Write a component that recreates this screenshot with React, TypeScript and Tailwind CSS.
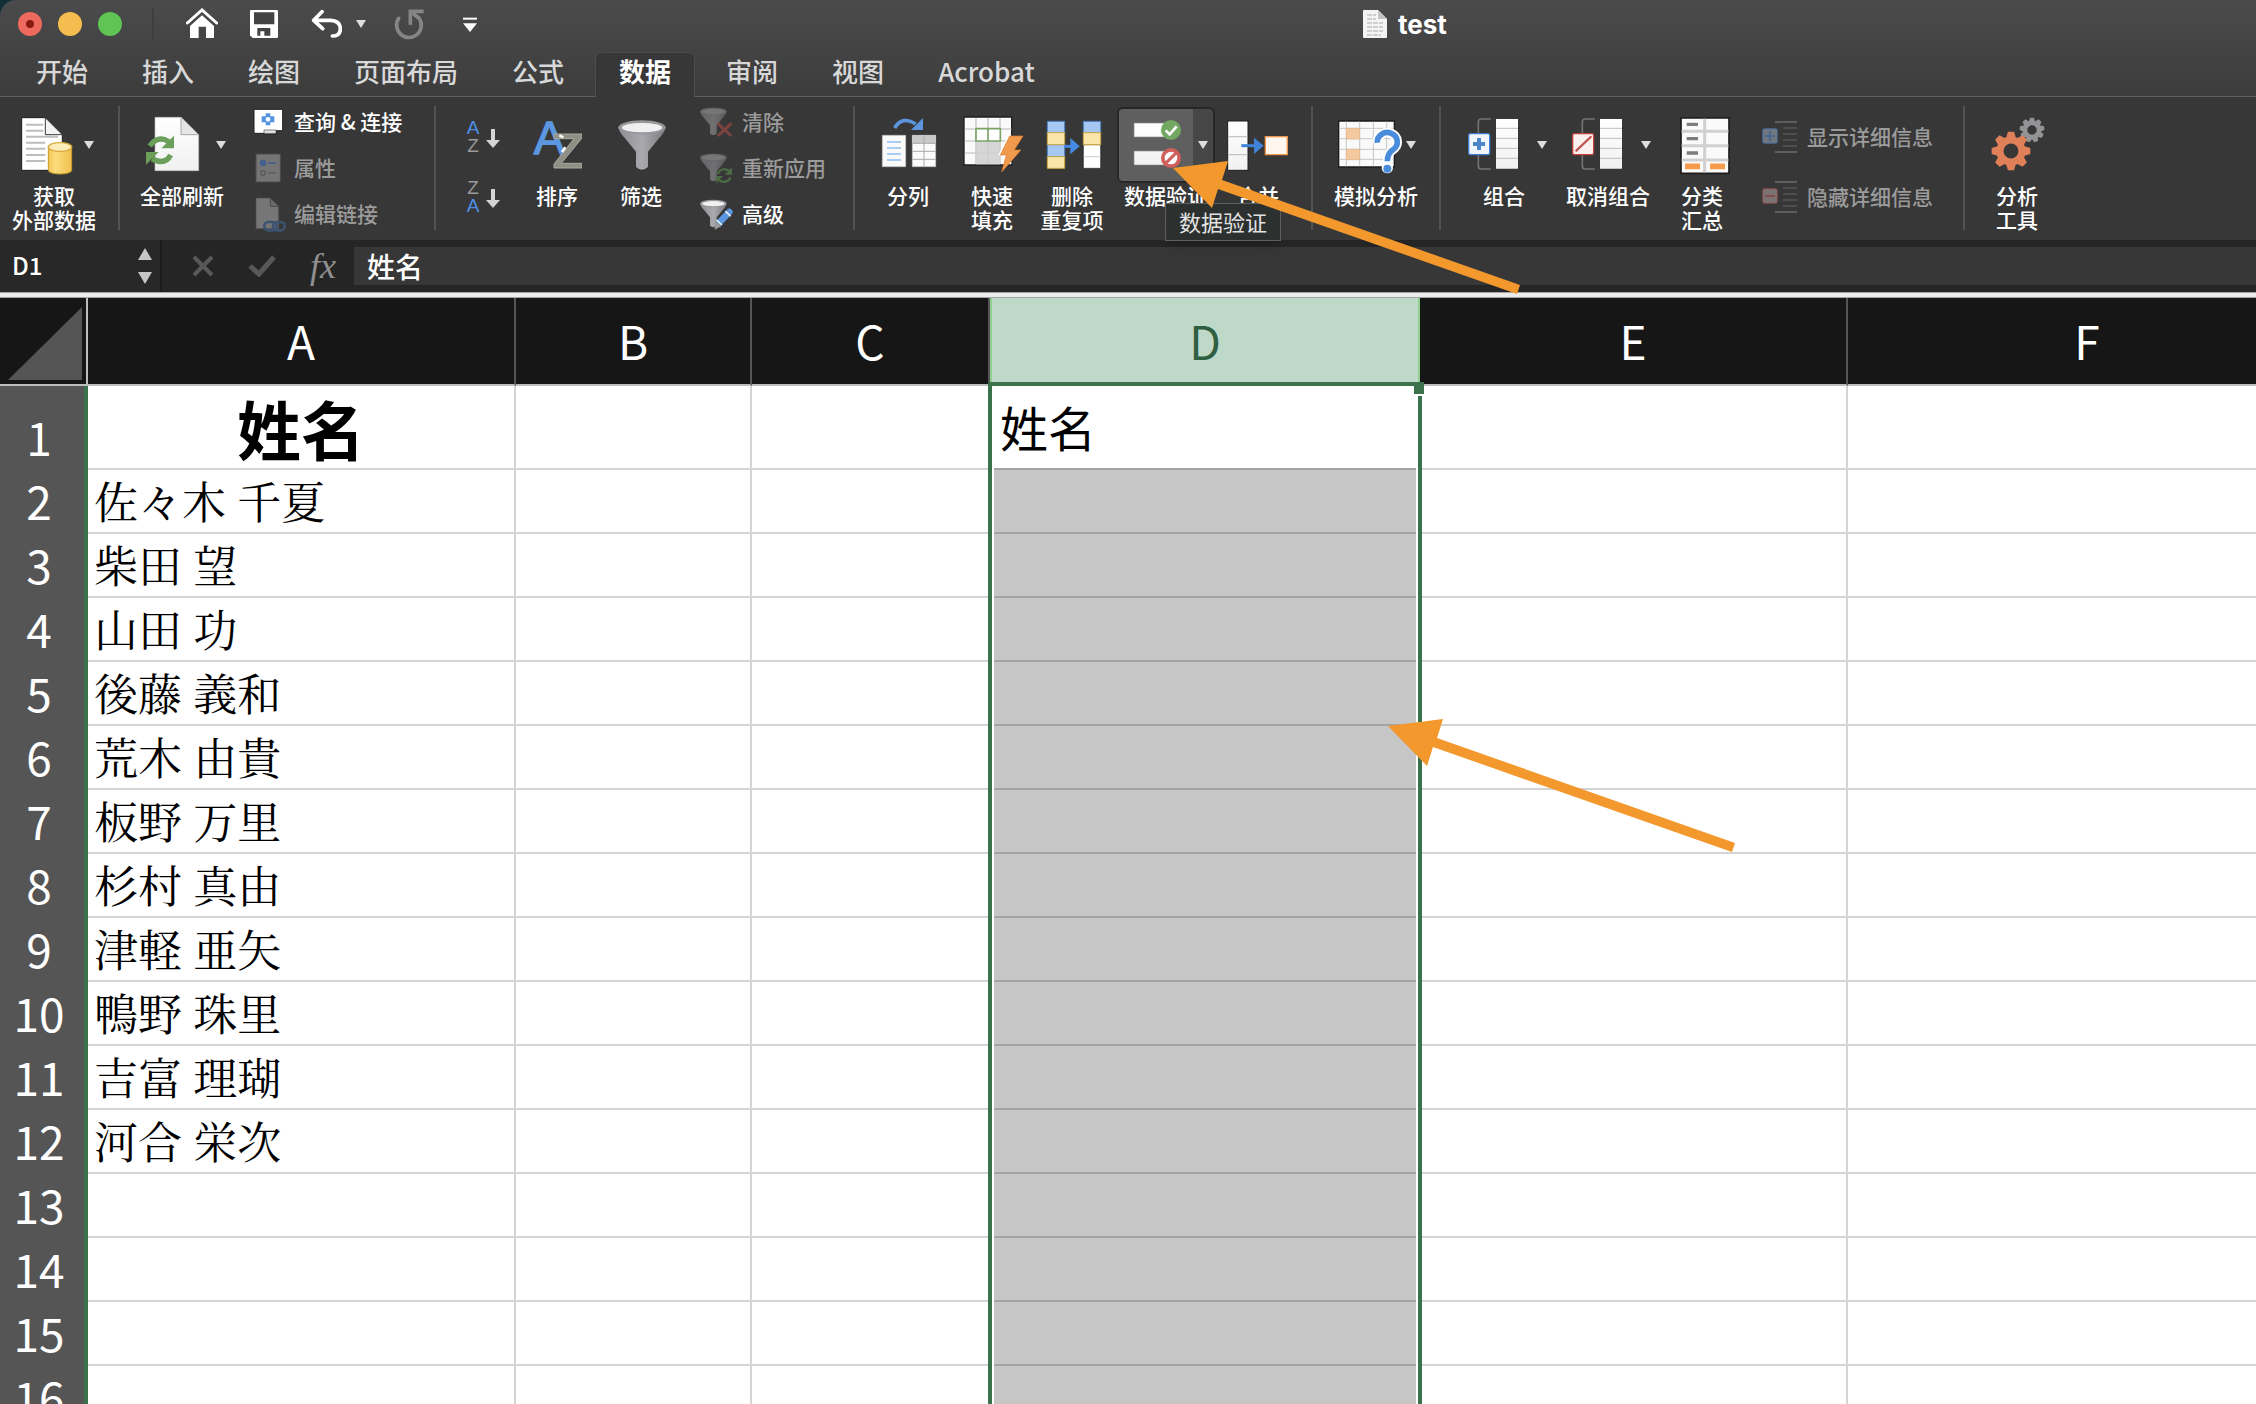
import type { ReactNode } from "react";

const TABS = ["开始", "插入", "绘图", "页面布局", "公式", "数据", "审阅", "视图", "Acrobat"];
const ACTIVE_TAB = "数据";

const COLUMNS = [
  { name: "A", width: "w-[428px]" },
  { name: "B", width: "w-[236px]" },
  { name: "C", width: "w-[238px]" },
  { name: "D", width: "w-[430px]" },
  { name: "E", width: "w-[428px]" },
  { name: "F", width: "w-[480px]" },
];

const NAMES = [
  "佐々木 千夏",
  "柴田 望",
  "山田 功",
  "後藤 義和",
  "荒木 由貴",
  "板野 万里",
  "杉村 真由",
  "津軽 亜矢",
  "鴨野 珠里",
  "吉富 理瑚",
  "河合 栄次",
  "",
  "",
  "",
  "",
];

/* ---------- shared bits ---------- */

function Caret() {
  return (
    <svg width="10" height="8" viewBox="0 0 10 8" className="shrink-0">
      <path d="M0 0h10L5 8z" fill="#dedede" />
    </svg>
  );
}

// Large ribbon icons share a 72px tall artboard at three units per pixel
function Art({ x, w, children }: { x: number; w: number; children: ReactNode }) {
  return (
    <svg width={w} height="72" viewBox={`${x} 39 ${w * 3} 216`} className="shrink-0">
      {children}
    </svg>
  );
}

function SmallArt({ x, y, w = 36, children }: { x: number; y: number; w?: number; children: ReactNode }) {
  return (
    <svg width={w} height="36" viewBox={`${x} ${y} ${w * 3} 108`} className="shrink-0">
      {children}
    </svg>
  );
}

function Gear({ cx, cy, r, teeth, color }: { cx: number; cy: number; r: number; teeth: number; color: string }) {
  const angles = Array.from({ length: teeth }, (_, i) => (360 / teeth) * i);
  const t = r * 0.2;
  return (
    <g fill={color}>
      <circle cx={cx} cy={cy} r={r * 0.57} fill="none" stroke={color} strokeWidth={r * 0.37} />
      {angles.map((a) => (
        <path
          key={a}
          d={`M${cx - t * 1.3} ${cy - r * 0.65}L${cx - t * 0.8} ${cy - r}H${cx + t * 0.8}L${cx + t * 1.3} ${cy - r * 0.65}z`}
          transform={`rotate(${a} ${cx} ${cy})`}
        />
      ))}
    </g>
  );
}

function Gradients() {
  return (
    <svg width="0" height="0" className="absolute">
      <defs>
        <linearGradient id="steel" x1="0" x2="1" y1="0" y2="0">
          <stop offset="0" stopColor="#8f8f93" />
          <stop offset="0.5" stopColor="#aaaaae" />
          <stop offset="1" stopColor="#7c7c80" />
        </linearGradient>
        <linearGradient id="paper" x1="0" x2="0" y1="0" y2="1">
          <stop offset="0" stopColor="#ffffff" />
          <stop offset="1" stopColor="#f1f1f1" />
        </linearGradient>
        <linearGradient id="gold" x1="0" x2="1" y1="0" y2="0">
          <stop offset="0" stopColor="#f3c653" />
          <stop offset="0.3" stopColor="#fbdc7c" />
          <stop offset="1" stopColor="#f2c14e" />
        </linearGradient>
      </defs>
    </svg>
  );
}

/* ---------- large icons ---------- */

function ExternalDataIcon() {
  return (
    <Art x={42} w={66}>
      <path d="M65 65h71l51 51v107H65z" fill="#fff" stroke="#1d1d1d" strokeWidth="3" />
      <path d="M78 86h52M78 104h52M78 122h96M78 140h58M78 158h58M78 177h58M78 195h58" stroke="#bdbdbd" strokeWidth="6" />
      <path d="M136 65v51h51z" fill="#f3f3f3" stroke="#3a3a3a" strokeWidth="3" />
      <path d="M145 153v70a35 11 0 0 0 70 0v-70z" fill="url(#gold)" stroke="#c99a2e" strokeWidth="3" />
      <ellipse cx="180" cy="153" rx="35" ry="13" fill="#fdeebb" stroke="#d9aa3c" strokeWidth="4" />
    </Art>
  );
}

function RefreshAllIcon() {
  return (
    <Art x={414} w={74}>
      <path d="M465 64h78l53 52v108H465z" fill="url(#paper)" stroke="#bcbcbc" strokeWidth="2" />
      <path d="M543 64v52h53z" fill="#e6e6e6" stroke="#a5a5a5" strokeWidth="3" />
      <path d="M449 150Q474 116 507 137" fill="none" stroke="#6b9f5a" strokeWidth="16" />
      <path d="M522 119v38h-38z" fill="#6b9f5a" />
      <path d="M512 177Q496 208 456 189" fill="none" stroke="#6b9f5a" strokeWidth="16" />
      <path d="M438 206v-38h38z" fill="#6b9f5a" />
    </Art>
  );
}

function SortIcon() {
  return (
    <Art x={306} w={50}>
      <text x="311" y="174" fill="#5b97e0" fontSize="140" fontFamily="Liberation Sans" stroke="#5b97e0" strokeWidth="4">A</text>
      <path d="M372 114h84v12l-62 76h62v14h-84v-12l60-76h-60z" fill="#8f8f86" stroke="#aaa99c" strokeWidth="3" />
      <path d="M388 118l12 6M396 168l10-14" stroke="#fff" strokeWidth="8" />
    </Art>
  );
}

function FunnelShape({ dark }: { dark?: boolean }) {
  return (
    <g>
      <path d="M565 96q4 14 20 31l33 40v46q18 16 36 0v-46l33-40q16-17 20-31z" fill="url(#steel)" />
      <ellipse cx="636" cy="94" rx="71" ry="21" fill="#98989c" />
      <ellipse cx="636" cy="95" rx="60" ry="14" fill={dark ? "#b5b5b5" : "#f0f0f0"} />
    </g>
  );
}

function FilterIcon() {
  return (
    <Art x={552} w={54}>
      <FunnelShape />
    </Art>
  );
}

function TextToColumnsIcon() {
  return (
    <Art x={57} w={60}>
      <path d="M107 96Q130 58 170 84" fill="none" stroke="#5b95dd" strokeWidth="11" />
      <path d="M192 66v36h-36z" fill="#5b95dd" />
      <path d="M70 118h70v94H70z" fill="#fafafa" stroke="#c9c9c9" strokeWidth="2" />
      <path d="M84 138h42M84 156h42M84 174h42M84 192h42" stroke="#a9ccf2" strokeWidth="6" />
      <path d="M160 118h70v94h-70z" fill="#fafafa" stroke="#c9c9c9" strokeWidth="2" />
      <path d="M160 118h70v24h-70z" fill="#c9c9c9" />
      <path d="M195 118v94M160 142h70M160 166h70M160 190h70" stroke="#aaa" strokeWidth="3" />
    </Art>
  );
}

function FlashFillIcon() {
  return (
    <Art x={303} w={64}>
      <path d="M315 63h143v144H315z" fill="#fafafa" stroke="#1f1f1f" strokeWidth="4" />
      <path d="M351 136h72v69h-72z" fill="#d6d6d6" />
      <path d="M351 66v138M387 66v138M423 66v138M318 99h139M318 135h139M318 171h139" stroke="#cfcfcf" strokeWidth="5" />
      <path d="M351 98h73v37h-73zM387 98v37" fill="#fff" stroke="#7aa368" strokeWidth="5" />
      <path d="M448 118l-30 58 18 8-4 20h25v-86z" fill="#fff" />
      <path d="M452 120h40l-26 42h20l-58 66 14-51h-18z" fill="#f09a4e" stroke="#d97b2e" strokeWidth="2" />
    </Art>
  );
}

function RemoveDuplicatesIcon() {
  return (
    <Art x={546} w={60}>
      <path d="M562 76h52v36h-52zM562 146h52v36h-52z" fill="#a5c8f3" stroke="#4b80be" strokeWidth="3" />
      <path d="M562 110h52v36h-52zM562 182h52v35h-52z" fill="#fae6a8" stroke="#c8a845" strokeWidth="3" />
      <path d="M670 76h52v34h-52z" fill="#a5c8f3" stroke="#4b80be" strokeWidth="3" />
      <path d="M670 146h52v71h-52z" fill="#fff" stroke="#222" strokeWidth="2" />
      <path d="M671 182h50" stroke="#ccc" strokeWidth="3" />
      <path d="M670 110h52v36h-52z" fill="#fae6a8" stroke="#c8a845" strokeWidth="3" />
      <path d="M612 151h22" stroke="#458ae3" strokeWidth="9" />
      <path d="M631 126l28 25-28 24z" fill="#458ae3" />
    </Art>
  );
}

function ValidationIcon() {
  return (
    <Art x={780} w={74}>
      <path d="M826 82h92v40h-92zM826 166h92v40h-92z" fill="url(#paper)" stroke="#d8d8d8" strokeWidth="2" />
      <circle cx="936" cy="102" r="30" fill="#73a862" />
      <path d="M920 103l12 12 21-24" fill="none" stroke="#fff" strokeWidth="8" />
      <circle cx="936" cy="186" r="30" fill="#cf5f5b" />
      <circle cx="936" cy="186" r="19" fill="#fff" />
      <path d="M922 200l28-28" stroke="#cf5f5b" strokeWidth="9" />
    </Art>
  );
}

function ConsolidateIcon() {
  return (
    <Art x={1098} w={66}>
      <path d="M1106 75h61v148h-61z" fill="url(#paper)" stroke="#1c1c1c" strokeWidth="3" />
      <path d="M1108 122h57M1108 176h57" stroke="#c4c4c4" strokeWidth="4" />
      <path d="M1147 149h40" stroke="#3f82d6" strokeWidth="9" />
      <path d="M1185 125l29 24-29 25z" fill="#3f82d6" />
      <path d="M1219 122h66v54h-66z" fill="#fff7ef" stroke="#ee944a" strokeWidth="4" />
    </Art>
  );
}

function WhatIfIcon() {
  return (
    <Art x={138} w={66}>
      <path d="M146 75h167v138H146z" fill="#fafafa" stroke="#1c1c1c" strokeWidth="4" />
      <path d="M169 77v134M209 77v134M250 77v134M290 77v134M148 97h163M148 128h163M148 160h163M148 190h163" stroke="#c6c6c6" strokeWidth="3" />
      <path d="M169 97h40v32h-40zM169 160h40v31h-40z" fill="#f5c99e" stroke="#e2b286" strokeWidth="2" />
      <path d="M262 140a30 28 0 1 1 48 20q-18 12-18 38" fill="none" stroke="#fff" strokeWidth="28" />
      <circle cx="292" cy="215" r="17" fill="#fff" />
      <path d="M262 140a30 28 0 1 1 48 20q-18 12-18 36" fill="none" stroke="#4a8cdc" strokeWidth="17" />
      <circle cx="292" cy="218" r="12" fill="#4a8cdc" />
    </Art>
  );
}

function GroupIcon({ remove }: { remove?: boolean }) {
  return (
    <Art x={516} w={72}>
      <path d="M606 69h-30q-8 0-8 8v134q0 8 8 8h30" fill="none" stroke="#737373" strokeWidth="5" />
      <path d="M621 69h66v149h-66z" fill="url(#paper)" />
      <path d="M621 97h66M621 127h66M621 157h66M621 187h66" stroke="#bdbdbd" strokeWidth="3" />
      <rect x="539" y="113" width="63" height="63" rx="5" fill={remove ? "#faf0f0" : "#f1f6fc"} stroke={remove ? "#c23f3a" : "#3f7dce"} strokeWidth="4" />
      {remove ? (
        <path d="M550 164l43-41" stroke="#c05450" strokeWidth="7" strokeLinecap="round" />
      ) : (
        <path d="M552 144h36M570 126v36" stroke="#4e86cb" strokeWidth="12" />
      )}
    </Art>
  );
}

function SubtotalIcon() {
  return (
    <Art x={69} w={60}>
      <path d="M96 66h144v166H96z" fill="#fafafa" stroke="#1c1c1c" strokeWidth="5" />
      <path d="M98 106h140M98 149h140M98 192h140M167 68v161" stroke="#d0d0d0" strokeWidth="9" />
      <path d="M113 85h34M113 128h34M113 171h34" stroke="#7d7d7d" strokeWidth="10" />
      <path d="M108 211h45M183 211h45" stroke="#f69a4c" strokeWidth="17" />
    </Art>
  );
}

function AnalysisIcon() {
  return (
    <Art x={1014} w={60}>
      <Gear cx={1149} cy={102} r={37} teeth={9} color="#939396" />
      <Gear cx={1086} cy={165} r={58} teeth={8} color="#df8058" />
    </Art>
  );
}

/* ---------- small icons ---------- */

function QueriesIcon() {
  return (
    <SmallArt x={756} y={26}>
      <path d="M762 42h86v64h-20v10h-36v-2h-30z" fill="#fff" stroke="#1f1f1f" strokeWidth="3" />
      <path d="M792 104h36v10h-36z" fill="#e8e8e8" stroke="#444" strokeWidth="2" />
      <path d="M797 54h14v9h12v18h-12v9h-14v-9h-12V63h12z" fill="#5592e0" />
      <circle cx="804" cy="72" r="7" fill="#fff" />
    </SmallArt>
  );
}

function PropertiesIcon() {
  return (
    <SmallArt x={756} y={162}>
      <path d="M768 174h73v84h-73z" fill="#757575" stroke="#4c4c4c" strokeWidth="3" />
      <circle cx="789" cy="201" r="10" fill="#41608d" />
      <path d="M804 201h24" stroke="#41608d" strokeWidth="5" />
      <circle cx="789" cy="231" r="7" fill="none" stroke="#595959" strokeWidth="4" />
      <path d="M804 231h24" stroke="#5b5b5b" strokeWidth="4" />
    </SmallArt>
  );
}

function EditLinksIcon() {
  return (
    <SmallArt x={756} y={302}>
      <path d="M768 308h43l25 25v67h-68z" fill="#767676" stroke="#4c4c4c" strokeWidth="2" />
      <path d="M811 308v25h25z" fill="#6a6a6a" stroke="#4a4a4a" strokeWidth="3" />
      <rect x="793" y="380" width="37" height="25" rx="12" fill="none" stroke="#3d5372" strokeWidth="8" />
      <rect x="819" y="380" width="35" height="25" rx="12" fill="none" stroke="#3d5372" strokeWidth="8" />
    </SmallArt>
  );
}

function MiniFunnel({ dark }: { dark?: boolean }) {
  return (
    <g transform="translate(494 -4) scale(0.56)" opacity={dark ? 0.5 : 1}>
      <FunnelShape dark={dark} />
    </g>
  );
}

function ClearFilterIcon() {
  return (
    <SmallArt x={810} y={26}>
      <MiniFunnel dark />
      <path d="M863 84l41 38M904 84l-41 38" stroke="#7d433f" strokeWidth="9" />
    </SmallArt>
  );
}

function ReapplyIcon() {
  return (
    <SmallArt x={810} y={26}>
      <MiniFunnel dark />
      <path d="M863 98q10-22 34-10M902 108q-12 22-36 8" fill="none" stroke="#4c6b44" strokeWidth="7" />
      <path d="M906 78v22h-22zM858 126v-22h22z" fill="#4c6b44" />
    </SmallArt>
  );
}

function AdvancedIcon() {
  return (
    <SmallArt x={810} y={26}>
      <MiniFunnel />
      <path d="M866 108l32-34" stroke="#5b97e0" strokeWidth="20" strokeLinecap="round" />
      <path d="M856 100l18 17-20 10z" fill="#9a9a9a" />
      <path d="M860 98l16 15M886 72l16 15" stroke="#fff" strokeWidth="4" />
    </SmallArt>
  );
}

function SortSmallIcon({ desc }: { desc?: boolean }) {
  return (
    <svg width="36" height="48" viewBox="0 -6 36 48" className="shrink-0">
      <text x="7" y="15" textAnchor="middle" fontSize="19" fontFamily="Liberation Sans" fill={desc ? "#9a9a9a" : "#4d8fe6"}>
        {desc ? "Z" : "A"}
      </text>
      <text x="7" y="33" textAnchor="middle" fontSize="19" fontFamily="Liberation Sans" fill={desc ? "#4d8fe6" : "#9a9a9a"}>
        {desc ? "A" : "Z"}
      </text>
      <path d="M25 10h4v11h5l-7 8-7-8h5z" fill="#d4d4d4" />
    </svg>
  );
}

function DetailIcon({ hide }: { hide?: boolean }) {
  const edge = hide ? "#834744" : "#3f6496";
  return (
    <SmallArt x={336} y={72} w={40}>
      <path d="M378 81h66M378 171h66" stroke="#6c6c6c" strokeWidth="5" />
      <path d="M402 99h42M402 117h42M402 135h42M402 153h42" stroke="#575757" strokeWidth="5" />
      <rect x="341" y="101" width="44" height="44" rx="5" fill={hide ? "#7c7272" : "#70777f"} stroke={edge} strokeWidth="3" />
      <path d={hide ? "M348 123h30" : "M348 123h30M363 108v30"} stroke={edge} strokeWidth="5" />
    </SmallArt>
  );
}

/* ---------- ribbon ---------- */

interface ItemProps {
  width: string;
  lines: string[];
  icon: ReactNode;
  caret?: boolean;
}

function RibbonItem({ width, lines, icon, caret }: ItemProps) {
  return (
    <button className={`flex flex-col items-center shrink-0 ${width}`}>
      <span className="flex h-[76px] items-center gap-1">
        {icon}
        {caret && <Caret />}
      </span>
      {lines.map((line) => (
        <span key={line} className="leading-6 whitespace-nowrap">{line}</span>
      ))}
    </button>
  );
}

function SmallItem({ icon, label, height, disabled }: { icon: ReactNode; label: string; height: string; disabled?: boolean }) {
  return (
    <button disabled={disabled} className={`flex items-center gap-[6px] whitespace-nowrap ${height} ${disabled ? "text-[#9b9b9b]" : "text-white"}`}>
      {icon}
      {label}
    </button>
  );
}

function Divider() {
  return <div className="mx-[10px] mt-[-1px] h-[124px] w-[2px] shrink-0 bg-[#525252]" />;
}

function Ribbon() {
  return (
    <div className="flex h-[143px] shrink-0 items-start bg-[#373737] pt-[10px] text-[21px] font-medium text-white">
      <RibbonItem width="w-[108px]" lines={["获取", "外部数据"]} icon={<ExternalDataIcon />} caret />
      <Divider />

      <div className="flex gap-2">
        <RibbonItem width="w-[104px]" lines={["全部刷新"]} icon={<RefreshAllIcon />} caret />
        <div className="-mt-2 flex w-[182px] flex-col pl-[10px]">
          <SmallItem height="h-[46px]" icon={<QueriesIcon />} label="查询 & 连接" />
          <SmallItem height="h-[46px]" icon={<PropertiesIcon />} label="属性" disabled />
          <SmallItem height="h-[46px]" icon={<EditLinksIcon />} label="编辑链接" disabled />
        </div>
      </div>
      <Divider />

      <div className="flex w-[76px] flex-col items-center">
        <button aria-label="升序" className="flex h-[60px] items-center"><SortSmallIcon /></button>
        <button aria-label="降序" className="flex h-[60px] items-center"><SortSmallIcon desc /></button>
      </div>
      <RibbonItem width="w-[70px]" lines={["排序"]} icon={<SortIcon />} />
      <RibbonItem width="w-[98px]" lines={["筛选"]} icon={<FilterIcon />} />
      <div className="-mt-2 flex w-[153px] flex-col pl-[10px]">
        <SmallItem height="h-[46px]" icon={<ClearFilterIcon />} label="清除" disabled />
        <SmallItem height="h-[46px]" icon={<ReapplyIcon />} label="重新应用" disabled />
        <SmallItem height="h-[46px]" icon={<AdvancedIcon />} label="高级" />
      </div>
      <Divider />

      <div className="flex pr-[6px]">
        <RibbonItem width="w-[86px]" lines={["分列"]} icon={<TextToColumnsIcon />} />
        <RibbonItem width="w-[82px]" lines={["快速", "填充"]} icon={<FlashFillIcon />} />
        <RibbonItem width="w-[78px]" lines={["删除", "重复项"]} icon={<RemoveDuplicatesIcon />} />
        <div className="relative flex w-[110px] flex-col items-center">
          <div className="flex h-[76px] overflow-hidden rounded-md border-2 border-[#272727] bg-[#474747]">
            <button aria-label="数据验证" className="flex items-center bg-[#5f5f5f]"><ValidationIcon /></button>
            <button aria-label="数据验证选项" className="flex w-5 items-center justify-center"><Caret /></button>
          </div>
          <span className="leading-6">数据验证</span>
          <div role="tooltip" className="absolute left-[54px] top-24 z-10 flex h-[38px] w-[116px] items-center justify-center border border-[#5c605f] bg-[#2c302f] pb-[2px] text-[22px] font-normal leading-8 text-[#e2e2e2] shadow-lg">
            数据验证
          </div>
        </div>
        <RibbonItem width="w-[74px]" lines={["合并"]} icon={<ConsolidateIcon />} />
      </div>
      <Divider />

      <RibbonItem width="w-[106px]" lines={["模拟分析"]} icon={<WhatIfIcon />} caret />
      <Divider />

      <RibbonItem width="w-[106px]" lines={["组合"]} icon={<GroupIcon />} caret />
      <RibbonItem width="w-[102px]" lines={["取消组合"]} icon={<GroupIcon remove />} caret />
      <RibbonItem width="w-[86px]" lines={["分类", "汇总"]} icon={<SubtotalIcon />} />
      <div className="flex w-[208px] flex-col pl-4">
        <SmallItem height="h-[60px]" icon={<DetailIcon />} label="显示详细信息" disabled />
        <SmallItem height="h-[60px]" icon={<DetailIcon hide />} label="隐藏详细信息" disabled />
      </div>
      <Divider />

      <RibbonItem width="w-[84px]" lines={["分析", "工具"]} icon={<AnalysisIcon />} />
    </div>
  );
}

/* ---------- title bar and tabs ---------- */

function TitleBar() {
  return (
    <div className="grid h-12 grid-cols-[1363fr_893fr] items-center">
      <div className="flex items-center pl-[18px]">
        <div className="flex gap-4">
          <button aria-label="关闭" className="flex h-6 w-6 items-center justify-center rounded-full bg-[#ee6a5f]">
            <span className="h-2 w-2 rounded-full bg-[#8b1a10]" />
          </button>
          <button aria-label="最小化" className="h-6 w-6 rounded-full bg-[#f5bd4f]" />
          <button aria-label="缩放" className="h-6 w-6 rounded-full bg-[#5fc454]" />
        </div>
        <div className="ml-[30px] h-8 w-[2px] bg-[#3e3e3e]" />
        <div className="ml-8 flex items-center gap-7">
          <button aria-label="主页">
            <svg width="32" height="32" viewBox="558 24 96 96">
              <path d="M562 69l44-39 44 39" fill="none" stroke="#fff" strokeWidth="9" strokeLinecap="round" />
              <path d="M606 46l36 32v36h-24V80h-22v34h-26V78z" fill="#fff" />
            </svg>
          </button>
          <button aria-label="保存">
            <svg width="32" height="32" viewBox="738 24 96 96">
              <path d="M754 30h76q4 0 4 4v76q0 4-4 4h-72l-8-8V34q0-4 4-4z" fill="#fff" />
              <path d="M762 37h61v36h-61zM772 84h39v23h-18V94h-12v13h-9z" fill="#434343" />
            </svg>
          </button>
          <div className="flex items-center gap-[14px]">
            <button aria-label="撤销">
              <svg width="36" height="32" viewBox="918 24 108 96">
                <path d="M966 35l-25 26 27 25M942 61h50q29 2 29 25 0 22-24 22" fill="none" stroke="#fff" strokeWidth="11" strokeLinecap="round" strokeLinejoin="round" />
              </svg>
            </button>
            <button aria-label="撤销列表"><Caret /></button>
          </div>
          <button aria-label="恢复" disabled>
            <svg width="30" height="32" viewBox="1176 26 90 96">
              <path d="M1190 57a37 37 0 1 0 61-1" fill="none" stroke="#858585" strokeWidth="11" strokeLinecap="round" />
              <path d="M1225 76V36h40" fill="none" stroke="#858585" strokeWidth="11" />
              <path d="M1228 38l22 18" stroke="#858585" strokeWidth="11" />
            </svg>
          </button>
          <button aria-label="自定义">
            <svg width="32" height="32" viewBox="1356 28 96 96">
              <path d="M1389 60h42" stroke="#fff" strokeWidth="6" />
              <path d="M1389 74h42l-21 26z" fill="#fff" />
            </svg>
          </button>
        </div>
      </div>
      <div className="flex items-center gap-[11px] text-white">
        <svg width="24" height="28" viewBox="0 0 24 28">
          <path d="M1 0h14l9 9v18q0 1-1 1H1q-1 0-1-1V1q0-1 1-1z" fill="#f4f4f4" />
          <path d="M15 0v9h9z" fill="#c4c4c4" />
          <path d="M4 5h9M4 9h9M4 13h16M4 17h16M4 21h16M4 25h14" stroke="#cfcfcf" strokeWidth="2" strokeDasharray="5 1" />
        </svg>
        <h1 className="font-[Inter] text-[26px] font-bold">test</h1>
      </div>
    </div>
  );
}

function Tabs() {
  return (
    <div className="flex h-[49px] gap-2 pl-[13px] pt-1 text-[26px] font-medium">
      {TABS.map((tab) => (
        <button
          key={tab}
          className={
            tab === ACTIVE_TAB
              ? "z-10 rounded-t-md border border-b-0 border-[#4c4c4c] bg-[#373737] px-[23px] pb-2 font-bold leading-9 text-white"
              : "px-[23px] pb-2 leading-9 text-[#d8d8d8]"
          }
        >
          {tab}
        </button>
      ))}
    </div>
  );
}

/* ---------- formula bar ---------- */

function FormulaBar() {
  return (
    <div className="flex h-[52px] shrink-0 items-center bg-[#252525] text-white">
      <div className="flex h-full w-[162px] items-center border-r-2 border-[#1c1c1c] bg-[#282828] pl-3">
        <input aria-label="名称框" defaultValue="D1" className="w-[126px] bg-transparent pb-[2px] text-[24px] font-medium outline-none" />
        <div className="flex flex-col gap-3">
          <button aria-label="上一个">
            <svg width="14" height="12" viewBox="0 0 14 12" className="block"><path d="M7 0l7 12H0z" fill="#c6c6c6" /></svg>
          </button>
          <button aria-label="下一个">
            <svg width="14" height="12" viewBox="0 0 14 12" className="block"><path d="M7 12L0 0h14z" fill="#c6c6c6" /></svg>
          </button>
        </div>
      </div>
      <div className="flex w-[192px] items-center gap-[34px] pl-[30px]">
        <button aria-label="取消">
          <svg width="22" height="22" viewBox="0 0 22 22"><path d="M2 2l18 18M20 2L2 20" stroke="#585858" strokeWidth="4" /></svg>
        </button>
        <button aria-label="输入">
          <svg width="28" height="22" viewBox="0 0 28 22"><path d="M2 11l9 8L26 2" fill="none" stroke="#585858" strokeWidth="5" /></svg>
        </button>
        <button aria-label="插入函数" className="font-['Liberation_Serif'] text-[36px] italic leading-10 text-[#909090]">fx</button>
      </div>
      <input aria-label="编辑栏" defaultValue="姓名" className="h-[38px] flex-1 bg-[#373737] px-[13px] text-[28px] font-medium outline-none" />
    </div>
  );
}

/* ---------- sheet ---------- */

const GRID = "border-b-2 border-r-2 border-[#d4d4d4]";

function RowHeader({ n }: { n: number }) {
  return (
    <th scope="row" className="border-r-4 border-[#3a734b] bg-[#555] pb-[6px] pr-[6px] align-bottom text-[46px] font-normal leading-[56px] text-white">
      {n}
    </th>
  );
}

function Sheet() {
  return (
    <div className="relative min-h-0 flex-1 overflow-hidden bg-white">
      <table className="w-[2328px] table-fixed border-separate border-spacing-0">
        <colgroup>
          <col className="w-[88px]" />
          {COLUMNS.map((c) => (
            <col key={c.name} className={c.width} />
          ))}
        </colgroup>
        <thead>
          <tr className="h-[88px] bg-[#161616] text-[46px] leading-[84px] text-white">
            <td className="border-b-2 border-r-2 border-[#bdbdbd]">
              <svg width="84" height="86" viewBox="0 0 84 86" className="block"><path d="M82 9v73H8z" fill="#555" /></svg>
            </td>
            {COLUMNS.map((c) => (
              <th
                key={c.name}
                scope="col"
                className={
                  c.name === "D"
                    ? "border-x-2 border-b-2 border-x-[#8fcf8f] bg-[#bfd9c9] pb-[2px] font-normal text-[#2f5f41]"
                    : "border-b-2 border-r-2 border-b-[#bdbdbd] border-r-[#555] pb-[2px] font-normal"
                }
              >
                {c.name}
              </th>
            ))}
          </tr>
        </thead>
        <tbody>
          <tr className="h-[84px]">
            <RowHeader n={1} />
            <td className={`${GRID} text-center text-[64px] font-bold leading-[82px]`}>姓名</td>
            <td className={GRID} />
            <td className={GRID} />
            <td className="px-1">
              <div className="h-[84px] border-b-2 border-[#a3a3a3] pl-[6px] text-[48px] leading-[80px]">姓名</div>
            </td>
            <td className={GRID} />
            <td className={GRID} />
          </tr>
          {NAMES.map((name, i) => (
            <tr key={i} className="h-16">
              <RowHeader n={i + 2} />
              <td className={`${GRID} whitespace-nowrap pb-[2px] pl-[6px] font-['Noto_Serif_CJK_JP','Noto_Sans_CJK_JP',serif] text-[44px] leading-[60px] text-black`}>{name}</td>
              <td className={GRID} />
              <td className={GRID} />
              <td className="px-1">
                <div className="h-16 border-b-2 border-[#a3a3a3] bg-[#c6c6c6]" />
              </td>
              <td className={GRID} />
              <td className={GRID} />
            </tr>
          ))}
        </tbody>
      </table>

      {/* selection frame with its fill handle */}
      <div className="pointer-events-none absolute -bottom-1 left-[988px] top-[84px] w-[434px] border-4 border-[#3a734b]">
        <div className="absolute -right-[6px] -top-1 h-[14px] w-[10px] border-b-2 border-white bg-[#3a734b]" />
      </div>
    </div>
  );
}

function Arrow({ place }: { place: string }) {
  return (
    <svg width="348" height="134" viewBox="0 0 348 134" className={`pointer-events-none absolute z-20 ${place}`}>
      <path d="M0 7L55 0L49 19L347 124L344 133L45 28L39 47z" fill="#f3982d" />
    </svg>
  );
}

export default function App() {
  return (
    <div className="relative flex h-screen flex-col overflow-hidden bg-[#12303a] font-['Noto_Sans_CJK_SC',sans-serif]">
      <Gradients />
      <header className="shrink-0 rounded-tl-2xl bg-linear-to-b from-[#4b4b4b] to-[#3c3c3c]">
        <TitleBar />
        <div className="shadow-[inset_0_-1px_0_#5e5e5e]">
          <Tabs />
        </div>
      </header>
      <Ribbon />
      <FormulaBar />
      <div className="h-[6px] shrink-0 border-y border-[#a3a3a3] bg-[#ececec]" />
      <Sheet />
      <Arrow place="left-[1173px] top-[161px]" />
      <Arrow place="left-[1388px] top-[719px]" />
    </div>
  );
}
